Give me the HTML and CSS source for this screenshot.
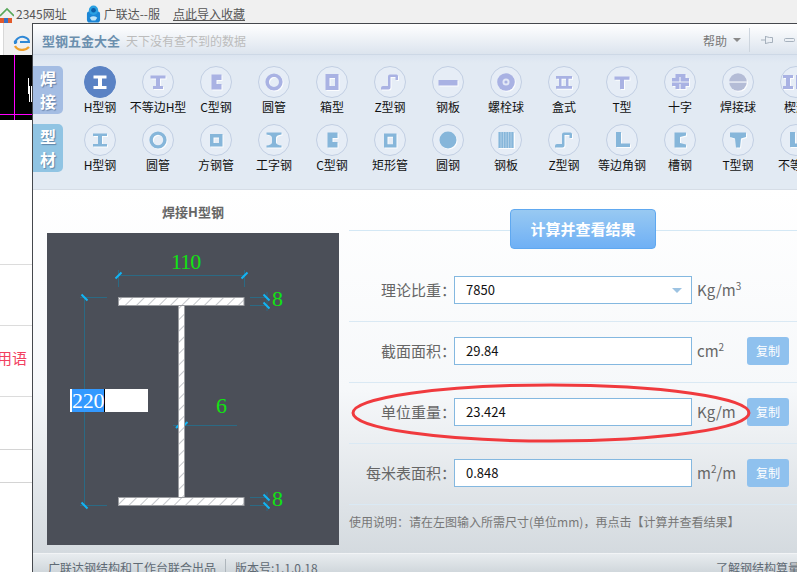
FILE: index.html
```html
<!DOCTYPE html>
<html lang="zh-CN">
<head>
<meta charset="utf-8">
<title>型钢五金大全</title>
<link rel="stylesheet" href="styles.css">
</head>
<body>
<svg class="defs" width="0" height="0" aria-hidden="true">
  <symbol id="i-h" viewBox="0 0 32 32"><path d="M9.500 9.500h13v3H18v7.500h4.500v3h-13v-3H14v-7.500H9.500z"/></symbol>
  <symbol id="i-uh" viewBox="0 0 32 32"><path d="M8.500 9.500h15v3h-5.500v7.500h3v3h-10v-3h3v-7.500h-5.500z"/></symbol>
  <symbol id="i-c" viewBox="0 0 32 32"><path d="M11.500 8.500h10v5.500h-5v4h5v5.500h-10z"/></symbol>
  <symbol id="i-ring" viewBox="0 0 32 32"><circle cx="16" cy="16" r="6.800" fill="none" stroke="currentColor" stroke-width="3.600"/></symbol>
  <symbol id="i-box" viewBox="0 0 32 32"><path fill-rule="evenodd" d="M9.500 8h13v16h-13zM13.500 12v8H19v-8z"/></symbol>
  <symbol id="i-z" viewBox="0 0 32 32"><path d="M7 23.500V22q0-2 2-2h5V10.500q0-2 2-2h6.500q1.500 0 1.500 1.500v4h-2.500v-3h-5v10.500q0 2-2 2z"/></symbol>
  <symbol id="i-plate" viewBox="0 0 32 32"><rect x="6.500" y="14" width="19" height="5.500"/></symbol>
  <symbol id="i-bolt" viewBox="0 0 32 32"><circle cx="16" cy="16" r="8.800"/><circle cx="16" cy="16" r="3.500" fill="#e3e8f6"/><circle cx="16" cy="16" r="1.600"/></symbol>
  <symbol id="i-hbox" viewBox="0 0 32 32"><path fill-rule="evenodd" d="M8 10h16v2.700h-3.500v7.300H24v2.700H8V20h3v-7.300H8zM13.500 12.700V20H18v-7.300z"/></symbol>
  <symbol id="i-t" viewBox="0 0 32 32"><path d="M8.500 10.500h15v3.200h-5.500V23h-4v-9.300H8.500z"/></symbol>
  <symbol id="i-cross" viewBox="0 0 32 32"><path d="M11.500 8h10v4h3.500v8h-3.500v3h-10v-3H8v-8h3.500z"/><path d="M8 16h17M16 11v5M16 18v5" stroke="#eef2f8" stroke-width="1.200" fill="none"/></symbol>
  <symbol id="i-ball" viewBox="0 0 32 32"><circle cx="16" cy="16" r="8.800"/><rect x="7" y="15.400" width="18" height="1.300" fill="#f0f4f9"/></symbol>
  <symbol id="i-wedge" viewBox="0 0 32 32"><path d="M3 9h10v3h-3v8h3v3H3v-3h3v-8H3zM16 9h5v8h8v6H16z"/></symbol>
  <symbol id="i-i2" viewBox="0 0 32 32"><path d="M9 9.500h14v2.500h-5v8h5v2.500H9V20h5v-8H9z"/></symbol>
  <symbol id="i-ring2" viewBox="0 0 32 32"><circle cx="16" cy="16" r="6.900" fill="none" stroke="currentColor" stroke-width="3.400"/></symbol>
  <symbol id="i-sq" viewBox="0 0 32 32"><path fill-rule="evenodd" d="M10 10h12.500v12.500H10zM13.500 13.500v5.500H19v-5.500z"/></symbol>
  <symbol id="i-beam" viewBox="0 0 32 32"><path d="M8.500 8.500h15v2q-5 .5-5.500 3v5q.5 2.500 5.500 3v2h-15v-2q5-.5 5.500-3v-5q-.5-2.500-5.500-3z"/></symbol>
  <symbol id="i-rect" viewBox="0 0 32 32"><path fill-rule="evenodd" d="M10 9.500h12.500v14H10zM13.500 12.800v7.400H19v-7.400z"/></symbol>
  <symbol id="i-disc" viewBox="0 0 32 32"><circle cx="16" cy="16" r="8.500"/></symbol>
  <symbol id="i-dots" viewBox="0 0 32 32"><rect x="8" y="8" width="16" height="16"/><path d="M8 9h16M8 11h16M8 13h16M8 15h16M8 17h16M8 19h16M8 21h16M8 23h16" stroke="#dbe8f4" stroke-width="1" stroke-dasharray="1 1.500" fill="none"/></symbol>
  <symbol id="i-l" viewBox="0 0 32 32"><path d="M10 8h5v11.500h9v3.500H10z"/></symbol>
  <symbol id="i-ch" viewBox="0 0 32 32"><path d="M10.500 8.500H22v3l-6 1.500v6l6 1.500v3H10.500z"/></symbol>
  <symbol id="i-t2" viewBox="0 0 32 32"><path d="M8 8.500h16v4.500l-5 1.500-1 9h-4l-1-9-5-1.500z"/></symbol>
</svg>

<div class="page">
  <header class="favbar">
    <svg class="favicon" width="14" height="20" viewBox="0 0 14 20"><path d="M0 12 7 5l7 7" fill="none" stroke="#58a85a" stroke-width="1.600"/><rect y="14" width="4" height="5" fill="#e25a2b"/><rect x="4" y="14" width="4" height="5" fill="#3a70c4"/><rect x="8" y="14" width="4" height="5" fill="#e25a2b"/><rect x="4.500" y="9" width="5" height="4" fill="#f0f0f0"/></svg>
    <span class="fav">2345网址</span>
    <svg class="favicon gap-a" width="15" height="20" viewBox="0 0 16 20"><rect x="1" y="7" width="14" height="12" rx="3" fill="#1b86d6"/><circle cx="8" cy="6" r="5" fill="#2aa0e2"/><circle cx="8" cy="6" r="2.500" fill="#0d5ea8"/><path d="M4 14q4-3 8 0l-2 3H6z" fill="#bfe4f8"/></svg>
    <span class="fav fav-b">广联达--服</span>
    <a class="fav link">点此导入收藏</a>
  </header>

  <div class="toolbar">
    <svg class="brand" width="18" height="16" viewBox="0 0 18 16"><path d="M2 9c0-5 5-8 9-7s5 3 5 5H7" fill="none" stroke="#2f88d6" stroke-width="2"/><path d="M2 11c3 5 10 5 14 1" fill="none" stroke="#f0a02a" stroke-width="2.400"/><circle cx="2.500" cy="7" r="1.800" fill="#2f88d6"/></svg>
  </div>

  <div class="behind">
    <div class="cad"><span class="cad-v"></span><span class="cad-h"></span><span class="cad-w"></span></div>
    <div class="doc">
      <div class="doc-a"></div>
      <div class="doc-b"></div>
      <div class="doc-c"><span class="red">用语</span></div>
      <div class="doc-d"></div>
      <div class="doc-e"></div>
    </div>
  </div>

  <section class="window">
    <div class="titlebar">
      <strong class="app-name">型钢五金大全</strong>
      <span class="app-tag">天下没有查不到的数据</span>
      <span class="spacer"></span>
      <span class="help">帮助</span>
      <span class="caret"></span>
      <span class="bar-sep"></span>
      <svg class="pin" width="13" height="12" viewBox="0 0 13 12"><path d="M0 6h4M4.500 2v8M4.500 2.500l4 1h3v5h-3l-4 1" fill="none" stroke="#a6b1bd"/></svg>
      <svg class="minus" width="11" height="12" viewBox="0 0 11 12"><rect x=".5" y="4.500" width="10" height="3" rx="1" fill="none" stroke="#a6b1bd"/></svg>
    </div>

    <div class="tools">
      <div class="tool-row row-a">
        <div class="tab tab-a">焊<br>接</div>
        <div class="tool active"><span class="disc"><svg><use href="#i-h"/></svg></span><span class="tool-name">H型钢</span></div>
        <div class="tool"><span class="disc"><svg><use href="#i-uh"/></svg></span><span class="tool-name">不等边H型</span></div>
        <div class="tool"><span class="disc"><svg><use href="#i-c"/></svg></span><span class="tool-name">C型钢</span></div>
        <div class="tool"><span class="disc"><svg><use href="#i-ring"/></svg></span><span class="tool-name">圆管</span></div>
        <div class="tool"><span class="disc"><svg><use href="#i-box"/></svg></span><span class="tool-name">箱型</span></div>
        <div class="tool"><span class="disc"><svg><use href="#i-z"/></svg></span><span class="tool-name">Z型钢</span></div>
        <div class="tool"><span class="disc"><svg><use href="#i-plate"/></svg></span><span class="tool-name">钢板</span></div>
        <div class="tool"><span class="disc"><svg><use href="#i-bolt"/></svg></span><span class="tool-name">螺栓球</span></div>
        <div class="tool"><span class="disc"><svg><use href="#i-hbox"/></svg></span><span class="tool-name">盒式</span></div>
        <div class="tool"><span class="disc"><svg><use href="#i-t"/></svg></span><span class="tool-name">T型</span></div>
        <div class="tool"><span class="disc"><svg><use href="#i-cross"/></svg></span><span class="tool-name">十字</span></div>
        <div class="tool ball"><span class="disc"><svg><use href="#i-ball"/></svg></span><span class="tool-name">焊接球</span></div>
        <div class="tool"><span class="disc"><svg><use href="#i-wedge"/></svg></span><span class="tool-name">楔形</span></div>
      </div>
      <div class="tool-row row-b">
        <div class="tab tab-b">型<br>材</div>
        <div class="tool"><span class="disc"><svg><use href="#i-i2"/></svg></span><span class="tool-name">H型钢</span></div>
        <div class="tool"><span class="disc"><svg><use href="#i-ring2"/></svg></span><span class="tool-name">圆管</span></div>
        <div class="tool"><span class="disc"><svg><use href="#i-sq"/></svg></span><span class="tool-name">方钢管</span></div>
        <div class="tool"><span class="disc"><svg><use href="#i-beam"/></svg></span><span class="tool-name">工字钢</span></div>
        <div class="tool"><span class="disc"><svg><use href="#i-c"/></svg></span><span class="tool-name">C型钢</span></div>
        <div class="tool"><span class="disc"><svg><use href="#i-rect"/></svg></span><span class="tool-name">矩形管</span></div>
        <div class="tool"><span class="disc"><svg><use href="#i-disc"/></svg></span><span class="tool-name">圆钢</span></div>
        <div class="tool"><span class="disc"><svg><use href="#i-dots"/></svg></span><span class="tool-name">钢板</span></div>
        <div class="tool"><span class="disc"><svg><use href="#i-z"/></svg></span><span class="tool-name">Z型钢</span></div>
        <div class="tool"><span class="disc"><svg><use href="#i-l"/></svg></span><span class="tool-name">等边角钢</span></div>
        <div class="tool"><span class="disc"><svg><use href="#i-ch"/></svg></span><span class="tool-name">槽钢</span></div>
        <div class="tool"><span class="disc"><svg><use href="#i-t2"/></svg></span><span class="tool-name">T型钢</span></div>
        <div class="tool"><span class="disc"><svg><use href="#i-l"/></svg></span><span class="tool-name">不等边</span></div>
      </div>
    </div>

    <div class="main">
      <div class="left">
        <h2 class="draw-title">焊接H型钢</h2>
        <div class="drawing">
          <svg class="section" width="292" height="312" viewBox="47 233 292 312">
            <defs>
              <pattern id="hatch" width="8" height="8" patternUnits="userSpaceOnUse" patternTransform="rotate(45)"><rect width="8" height="8" fill="#fff"/><rect width="1" height="8" fill="#c4c6ca"/></pattern>
            </defs>
            <g class="dim">
              <path d="M118.500 275.500H244.500M118.500 270V287M244.500 270V287"/>
              <path d="M80 297.500H107M80 505.500H107M84.500 297V505"/>
              <path d="M250 297.500H268M250 305.500H268M267 292V311"/>
              <path d="M250 497.500H268M250 505.500H268M267 492V511"/>
              <path d="M173 425.500H237M179 412V428"/>
            </g>
            <g class="tick">
              <path d="M115.500 278.500 121.500 272.500M241.500 278.500 247.500 272.500"/>
              <path d="M81.500 294.500 87.500 300.500M81.500 502.500 87.500 508.500"/>
              <path d="M263.500 294.500 269.500 300.500M263.500 302.500 269.500 308.500"/>
              <path d="M263.500 494.500 269.500 500.500M263.500 502.500 269.500 508.500"/>
              <path d="M176 428 182 422M181.500 428 187.500 422"/>
            </g>
            <g class="steel">
              <rect x="118.500" y="297.500" width="125.500" height="8"/>
              <rect x="178.500" y="305.500" width="6" height="192"/>
              <rect x="118.500" y="497.500" width="125.500" height="8"/>
            </g>
            <g class="dim-text">
              <text x="171" y="269">110</text>
              <text x="272" y="306">8</text>
              <text x="216" y="413">6</text>
              <text x="272" y="506">8</text>
            </g>
          </svg>
          <div class="dim-input"><span class="selected">220</span></div>
        </div>
      </div>

      <div class="right">
        <div class="calc-row">
          <button class="calc-btn">计算并查看结果</button>
        </div>
        <div class="form-row first">
          <label class="f-label">理论比重<span class="colon">：</span></label>
          <div class="f-input">7850<span class="f-caret"></span></div>
          <span class="f-unit">Kg/m<sup>3</sup></span>
        </div>
        <div class="form-row">
          <label class="f-label">截面面积<span class="colon">：</span></label>
          <div class="f-input">29.84</div>
          <span class="f-unit">cm<sup>2</sup></span>
          <button class="copy">复制</button>
        </div>
        <div class="form-row">
          <label class="f-label">单位重量<span class="colon">：</span></label>
          <div class="f-input">23.424</div>
          <span class="f-unit">Kg/m</span>
          <button class="copy">复制</button>
        </div>
        <div class="form-row">
          <label class="f-label">每米表面积<span class="colon">：</span></label>
          <div class="f-input">0.848</div>
          <span class="f-unit">m<sup>2</sup>/m</span>
          <button class="copy">复制</button>
        </div>
        <p class="usage">使用说明<span class="colon">：</span>请在左图输入所需尺寸(单位mm)<span class="colon">，</span>再点击【计算并查看结果】</p>
        <svg class="ellipse" width="404" height="64" viewBox="0 0 404 64"><ellipse cx="202" cy="32" rx="198" ry="28" fill="none" stroke="#f03a3e" stroke-width="3"/></svg>
      </div>
    </div>

    <footer class="status">
      <span>广联达钢结构和工作台联合出品</span>
      <span class="st-sep"></span>
      <span>版本号:1.1.0.18</span>
      <span class="spacer"></span>
      <span class="st-right">了解钢结构算量</span>
    </footer>
  </section>
</div>
</body>
</html>
```

FILE: styles.css
```css
* { box-sizing: border-box; }
html, body { margin: 0; padding: 0; height: 100%; }
body {
  overflow: hidden;
  background: #fff;
  font-family: "Noto Sans CJK SC", "Liberation Sans", sans-serif;
}
.defs { position: absolute; }
.page { position: relative; width: 797px; height: 572px; overflow: hidden; }

.favbar {
  height: 23px;
  background: #f0f0f0;
  display: flex;
  align-items: center;
  padding-top: 4px;
  white-space: nowrap;
}
.favicon { flex: none; }
.fav { font-size: 12px; line-height: 16px; color: #555; margin-left: 2px; }
.fav-b { margin-left: 3px; }
.gap-a { margin-left: 19px; }
.link { margin-left: 13px; text-decoration: underline; }

.toolbar {
  height: 32px;
  background: #f0f0f0;
  border-left: 1px solid #d8d8d8;
  margin-left: 3px;
  padding: 12px 0 0 9px;
}
.brand { display: block; }

.behind { width: 32px; }
.cad { position: relative; height: 65px; background: #000; }
.cad-v { position: absolute; left: 14px; top: 0; width: 1px; height: 65px; background: #ff00ff; }
.cad-h { position: absolute; left: 0; top: 59px; width: 32px; height: 1px; background: #ff00ff; }
.cad-w { position: absolute; left: 28px; top: 23px; width: 1px; height: 16px; background: #fff; box-shadow: 1px 8px 0 0 #fff, 3px 8px 0 0 #fff; }
.doc-a { height: 145px; border-bottom: 1px solid #dcdcdc; }
.doc-b { height: 61px; border-bottom: 1px solid #dcdcdc; }
.doc-c { height: 71px; padding-top: 22px; border-bottom: 1px solid #dcdcdc; direction: rtl; overflow: hidden; }
.doc-d { height: 53px; border-bottom: 1px solid #d4d4d4; }
.doc-e { height: 33px; border-bottom: 1px solid #d4d4d4; }
.red { display: block; font-size: 15px; line-height: 20px; color: #f2405f; width: 32px; padding-right: 5px; white-space: nowrap; }

.window {
  position: absolute;
  left: 32px;
  top: 23px;
  width: 780px;
  height: 549px;
  border-top: 1px solid #45484d;
  border-left: 1px solid #45484d;
  display: flex;
  flex-direction: column;
  background: #fff;
  overflow: hidden;
}

.titlebar {
  flex: none;
  height: 31px;
  background: linear-gradient(#ffffff, #dce4ee);
  display: flex;
  align-items: center;
  padding: 2px 0 0 9px;
  border-bottom: 1px solid #cdd8e6;
  white-space: nowrap;
}
.app-name { font-size: 13px; color: #6b8fae; font-weight: 700; }
.app-tag { font-size: 12px; color: #bcbcbc; margin-left: 6px; }
.spacer { flex: 1; }
.help { font-size: 12px; color: #777; margin-right: 6px; }
.caret { width: 0; height: 0; border: 4px solid transparent; border-top: 4px solid #8a8a8a; border-bottom: 0; }
.bar-sep { width: 1px; height: 24px; background: #cdd5de; margin: 0 11px 0 8px; }
.pin { margin-right: 10px; }
.minus { margin-right: 17px; }

.tools {
  flex: none;
  height: 135px;
  background: linear-gradient(#dbe4f0, #e2eaf3 8px);
  border-bottom: 1px solid #d6dde6;
  padding-top: 11px;
  display: flex;
  flex-direction: column;
  gap: 10px;
}
.tool-row { display: flex; height: 48px; }
.tab {
  flex: none;
  width: 30px;
  height: 48px;
  margin-right: 8px;
  border-radius: 0 5px 5px 0;
  color: #fff;
  font-size: 16px;
  font-weight: 700;
  line-height: 23px;
  text-align: center;
  padding-top: 1px;
  text-shadow: 1px 1px 1px rgba(60, 90, 130, .6);
}
.tab-a { background: #a4bde3; }
.tab-b { background: #90c4e3; }
.tool { flex: none; width: 58px; display: flex; flex-direction: column; align-items: center; }
.disc {
  display: block;
  width: 32px;
  height: 32px;
  border-radius: 50%;
  border: 1px solid #c2cfe3;
  background: #e6edf6;
}
.disc svg {
  display: block;
  width: 32px;
  height: 32px;
  margin: -1px;
  fill: currentColor;
  filter: drop-shadow(1px 1px 0 rgba(255, 255, 255, .85));
}
.row-a .disc { color: #a9b2e3; }
.row-b .disc { color: #86b6da; }
.row-a .ball .disc { color: #b4bcd6; }
.tool.active .disc { background: #5a82c4; border-color: #5a82c4; color: #fff; }
.tool.active .disc svg { filter: none; }
.tool-name { font-size: 12px; line-height: 16px; margin-top: 1px; color: #111; white-space: nowrap; }

.main {
  flex: none;
  height: 363px;
  display: flex;
  background: linear-gradient(#ffffff 0, #f6f8fa 55%, #d4dadf 100%);
}
.left { flex: none; width: 316px; padding-left: 14px; }
.draw-title {
  margin: 0;
  width: 292px;
  height: 43px;
  padding-top: 12px;
  text-align: center;
  font-size: 13px;
  line-height: 20px;
  font-weight: 700;
  color: #666;
}
.drawing { position: relative; width: 292px; height: 312px; background: #4b4f58; }
.section { display: block; }
.dim { fill: none; stroke: #2b6a84; stroke-width: 1; }
.tick { fill: none; stroke: #12b4f4; stroke-width: 2; }
.steel { fill: url(#hatch); stroke: #9a9ca0; stroke-width: 1; }
.dim-text { fill: #12e312; font-family: "Liberation Serif", serif; font-size: 22px; letter-spacing: -1px; }
.dim-input {
  position: absolute;
  left: 23px;
  top: 156px;
  width: 78px;
  height: 23px;
  background: #fff;
  padding-left: 2px;
  font-family: "Liberation Serif", serif;
  font-size: 22px;
  letter-spacing: -.2px;
  line-height: 23px;
}
.selected { display: block; width: 33px; height: 23px; background: #3399ff; color: #fff; border-right: 1px solid #000; white-space: nowrap; }

.right { flex: 1; position: relative; }
.calc-row {
  height: 40px;
  margin-top: 19px;
  display: flex;
  justify-content: flex-start;
  padding-left: 161px;
  background: linear-gradient(#d4e8f5, #d4e8f5) 0 21px / 100% 1px no-repeat;
}
.calc-btn {
  width: 146px;
  height: 40px;
  border: 1px solid #5fa8f0;
  border-radius: 4px;
  background: linear-gradient(#98c9f2, #6fb0f5);
  color: #fff;
  font: 700 15px/20px "Noto Sans CJK SC", sans-serif;
  padding: 0;
}
.form-row {
  height: 61px;
  display: flex;
  align-items: flex-start;
  padding-top: 15px;
  border-top: 1px solid #dae9f4;
}
.form-row.first { border-top: 0; height: 72px; padding-top: 27px; }
.f-label {
  flex: none;
  width: 107px;
  margin-right: -2px;
  text-align: right;
  font-size: 15px;
  line-height: 28px;
  color: #666;
  white-space: nowrap;
}
.colon { font-family: "Noto Sans CJK TC", sans-serif; }
.f-input {
  position: relative;
  flex: none;
  width: 238px;
  height: 28px;
  border: 1px solid #84b8e0;
  background: #fff;
  padding-left: 11px;
  font-size: 13px;
  line-height: 26px;
  color: #111;
}
.f-caret {
  position: absolute;
  right: 9px;
  top: 11px;
  width: 0;
  height: 0;
  border: 5px solid transparent;
  border-top: 5px solid #9dc3e2;
  border-bottom: 0;
}
.f-unit {
  flex: none;
  width: 50px;
  margin-left: 5px;
  font-size: 15px;
  line-height: 28px;
  color: #666;
  white-space: nowrap;
}
.f-unit sup { font-size: 10px; line-height: 0; vertical-align: 6px; }
.copy {
  flex: none;
  width: 42px;
  height: 28px;
  border: 0;
  border-radius: 3px;
  background: #8fc1ee;
  color: #fff;
  font: 12px/28px "Noto Sans CJK SC", sans-serif;
  padding: 0;
}
.usage {
  margin: 0;
  border-top: 1px solid #dae9f4;
  padding-top: 8px;
  font-size: 12px;
  line-height: 18px;
  color: #777;
  white-space: nowrap;
}
.ellipse { position: absolute; left: 0; top: 191px; }

.status {
  flex: none;
  height: 20px;
  display: flex;
  align-items: flex-start;
  background: linear-gradient(#e8ecef, #cfd6db);
  border-top: 1px solid #f2f4f6;
  padding: 5px 0 0 15px;
  font-size: 12px;
  line-height: 17px;
  color: #5f6a74;
  white-space: nowrap;
}
.st-sep { width: 1px; height: 14px; background: #aeb6bc; margin: 0 9px; }
.st-right { width: 96px; }
```
